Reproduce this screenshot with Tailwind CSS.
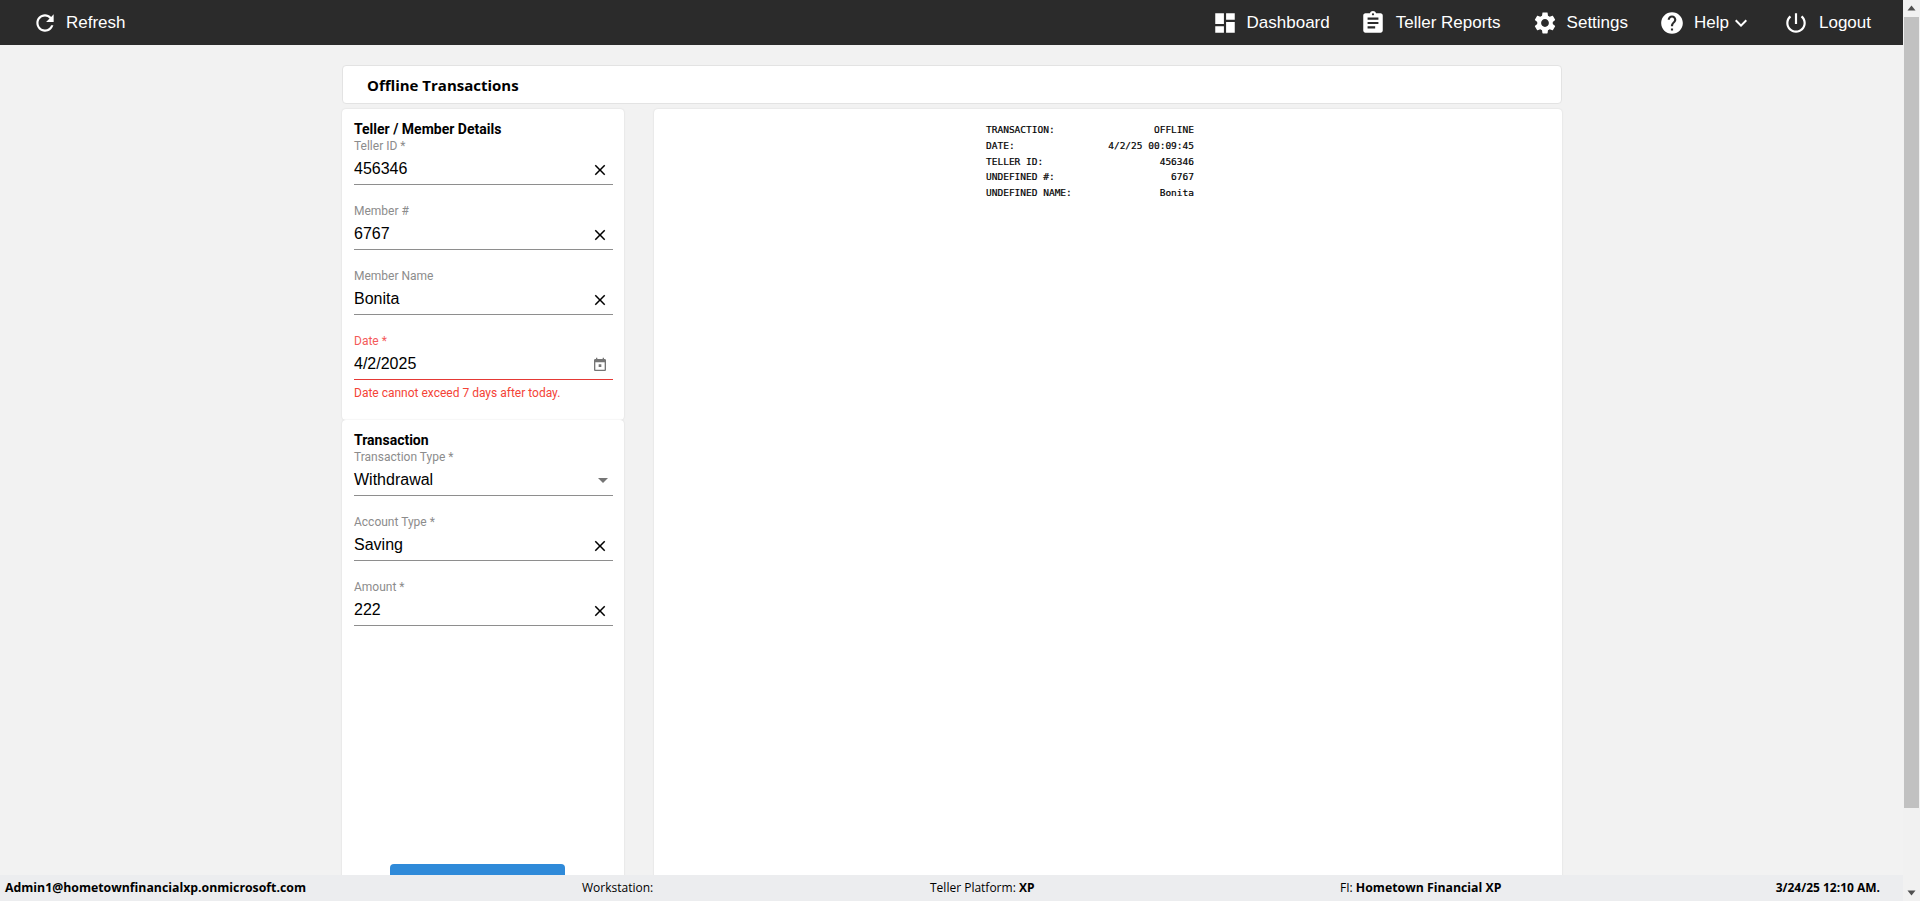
<!DOCTYPE html>
<html lang="en">
    <head>
        <meta charset="UTF-8" />
        <meta name="viewport" content="width=device-width, initial-scale=1.0" />
        <title>Offline Transactions</title>
        <script src="https://cdn.jsdelivr.net/npm/@tailwindcss/browser@4"></script>
    </head>

    <body class="h-[901px] overflow-hidden bg-[#f2f2f2] font-['Liberation_Sans',sans-serif] text-black">
        <div class="relative flex h-[901px]">
            <div class="relative h-full w-[1903px] overflow-hidden">
                <!-- top bar -->
                <nav class="flex h-[45px] items-center bg-[#2b2b2b] text-[17px] text-white">
                    <a class="ml-[32px] flex items-center" href="#">
                        <svg viewBox="0 0 24 24" fill="currentColor" class="h-[26px] w-[26px]"><path d="M17.65 6.35C16.2 4.9 14.21 4 12 4c-4.42 0-7.99 3.58-7.99 8s3.57 8 7.99 8c3.73 0 6.84-2.55 7.73-6h-2.08c-.82 2.33-3.04 4-5.65 4-3.31 0-6-2.69-6-6s2.69-6 6-6c1.66 0 3.14.69 4.22 1.78L13 11h7V4l-2.35 2.35z" /></svg>
                        <span class="ml-[8px]">Refresh</span>
                    </a>
                    <div class="ml-auto flex items-center pr-[32px]">
                        <a class="flex items-center" href="#">
                            <svg viewBox="0 0 24 24" fill="currentColor" class="h-[26px] w-[26px]"><path d="M3 13h8V3H3v10zm0 8h8v-6H3v6zm10 0h8V11h-8v10zm0-18v6h8V3h-8z" /></svg>
                            <span class="ml-[9px]">Dashboard</span>
                        </a>
                        <a class="ml-[30px] flex items-center" href="#">
                            <svg viewBox="0 0 24 24" fill="currentColor" class="h-[26px] w-[26px]"><path d="M19 3h-4.18C14.4 1.84 13.3 1 12 1c-1.3 0-2.4.84-2.82 2H5c-1.1 0-2 .9-2 2v14c0 1.1.9 2 2 2h14c1.1 0 2-.9 2-2V5c0-1.1-.9-2-2-2zm-7 0c.55 0 1 .45 1 1s-.45 1-1 1-1-.45-1-1 .45-1 1-1zm2 14H7v-2h7v2zm3-4H7v-2h10v2zm0-4H7V7h10v2z" /></svg>
                            <span class="ml-[10px]">Teller Reports</span>
                        </a>
                        <a class="ml-[31px] flex items-center" href="#">
                            <svg viewBox="0 0 24 24" fill="currentColor" class="h-[26px] w-[26px]"><path d="M19.14 12.94c.04-.3.06-.61.06-.94 0-.32-.02-.64-.07-.94l2.03-1.58c.18-.14.23-.41.12-.61l-1.92-3.32c-.12-.22-.37-.29-.59-.22l-2.39.96c-.5-.38-1.03-.7-1.62-.94l-.36-2.54c-.04-.24-.24-.41-.48-.41h-3.84c-.24 0-.43.17-.47.41l-.36 2.54c-.59.24-1.13.57-1.62.94l-2.39-.96c-.22-.08-.47 0-.59.22L2.74 8.87c-.12.21-.08.47.12.61l2.03 1.58c-.05.3-.09.63-.09.94s.02.64.07.94l-2.03 1.58c-.18.14-.23.41-.12.61l1.92 3.32c.12.22.37.29.59.22l2.39-.96c.5.38 1.03.7 1.62.94l.36 2.54c.05.24.24.41.48.41h3.84c.24 0 .44-.17.47-.41l.36-2.54c.59-.24 1.13-.56 1.62-.94l2.39.96c.22.08.47 0 .59-.22l1.92-3.32c.12-.22.07-.47-.12-.61l-2.01-1.58zM12 15.6c-1.98 0-3.6-1.62-3.6-3.6s1.62-3.6 3.6-3.6 3.6 1.62 3.6 3.6-1.62 3.6-3.6 3.6z" /></svg>
                            <span class="ml-[9px]">Settings</span>
                        </a>
                        <a class="ml-[31px] flex items-center" href="#">
                            <svg viewBox="0 0 24 24" fill="currentColor" class="h-[26px] w-[26px]"><path d="M12 2C6.48 2 2 6.48 2 12s4.48 10 10 10 10-4.48 10-10S17.52 2 12 2zm1 17h-2v-2h2v2zm2.07-7.75l-.9.92C13.45 12.9 13 13.5 13 15h-2v-.5c0-1.1.45-2.1 1.17-2.83l1.24-1.26c.37-.36.59-.86.59-1.41 0-1.1-.9-2-2-2s-2 .9-2 2H8c0-2.21 1.79-4 4-4s4 1.79 4 4c0 .88-.36 1.68-.93 2.25z" /></svg>
                            <span class="ml-[9px]">Help</span>
                            <svg viewBox="0 0 24 24" fill="currentColor" class="h-[24px] w-[24px]"><path d="M16.59 8.59L12 13.17 7.41 8.59 6 10l6 6 6-6z" /></svg>
                        </a>
                        <a class="ml-[30px] flex items-center" href="#">
                            <svg viewBox="0 0 24 24" fill="currentColor" class="h-[26px] w-[26px]"><path d="M13 3h-2v10h2V3zm4.83 2.17l-1.42 1.42C17.99 7.86 19 9.81 19 12c0 3.87-3.13 7-7 7s-7-3.13-7-7c0-2.19 1.01-4.14 2.58-5.42L6.17 5.17C4.23 6.82 3 9.26 3 12c0 4.97 4.03 9 9 9s9-4.03 9-9c0-2.74-1.23-5.18-3.17-6.83z" /></svg>
                            <span class="ml-[10px]">Logout</span>
                        </a>
                    </div>
                </nav>

                <main class="ml-[342px] w-[1220px] pt-[20px]">
                    <div class="flex h-[39px] items-center rounded border border-[#e3e3e3] bg-white pt-[1px] pl-[24px] font-['Open_Sans',sans-serif] text-[15px] font-bold">Offline Transactions</div>

                    <div class="mt-[5px] flex gap-[30px]">
                        <div class="w-[282px]">
                            <section class="h-[311px] rounded bg-white pt-[11px] pr-[11px] pl-[12px] font-['Roboto',sans-serif] shadow-[0_0_2px_rgba(0,0,0,0.12)]">
                                <h2 class="text-[14px] leading-[19px] font-bold">Teller / Member Details</h2>
                                <div>
                                    <div class="text-[12px] leading-[14px] text-[#8c8c8c]">Teller ID *</div>
                                    <div class="flex h-[32px] items-center justify-between border-b border-[#8e8e8e] pt-[1px] font-['Liberation_Sans',sans-serif] text-[16px]">
                                        <span>456346</span>
                                        <svg viewBox="0 0 24 24" fill="currentColor" class="mt-[1px] mr-[4px] h-[18px] w-[18px]"><path d="M19 6.41L17.59 5 12 10.59 6.41 5 5 6.41 10.59 12 5 17.59 6.41 19 12 13.41 17.59 19 19 17.59 13.41 12 19 6.41z" /></svg>
                                    </div>
                                </div>
                                <div class="pt-[19px]">
                                    <div class="text-[12px] leading-[14px] text-[#8c8c8c]">Member #</div>
                                    <div class="flex h-[32px] items-center justify-between border-b border-[#8e8e8e] pt-[1px] font-['Liberation_Sans',sans-serif] text-[16px]">
                                        <span>6767</span>
                                        <svg viewBox="0 0 24 24" fill="currentColor" class="mt-[1px] mr-[4px] h-[18px] w-[18px]"><path d="M19 6.41L17.59 5 12 10.59 6.41 5 5 6.41 10.59 12 5 17.59 6.41 19 12 13.41 17.59 19 19 17.59 13.41 12 19 6.41z" /></svg>
                                    </div>
                                </div>
                                <div class="pt-[19px]">
                                    <div class="text-[12px] leading-[14px] text-[#8c8c8c]">Member Name</div>
                                    <div class="flex h-[32px] items-center justify-between border-b border-[#8e8e8e] pt-[1px] font-['Liberation_Sans',sans-serif] text-[16px]">
                                        <span>Bonita</span>
                                        <svg viewBox="0 0 24 24" fill="currentColor" class="mt-[1px] mr-[4px] h-[18px] w-[18px]"><path d="M19 6.41L17.59 5 12 10.59 6.41 5 5 6.41 10.59 12 5 17.59 6.41 19 12 13.41 17.59 19 19 17.59 13.41 12 19 6.41z" /></svg>
                                    </div>
                                </div>
                                <div class="pt-[19px]">
                                    <div class="text-[12px] leading-[14px] text-[#f45a5a]">Date *</div>
                                    <div class="flex h-[32px] items-center justify-between border-b border-[#e53935] pt-[1px] font-['Liberation_Sans',sans-serif] text-[16px]">
                                        <span>4/2/2025</span>
                                        <svg viewBox="0 0 24 24" fill="#757575" class="mt-[1px] mr-[5px] h-[16px] w-[16px]"><path d="M19 3h-1V1h-2v2H8V1H6v2H5c-1.11 0-1.99.9-1.99 2L3 19c0 1.1.89 2 2 2h14c1.1 0 2-.9 2-2V5c0-1.1-.9-2-2-2zm0 16H5V8h14v11zM10 11h4v4h-4z" /></svg>
                                    </div>
                                    <div class="mt-[6px] text-[12px] leading-[14px] text-[#f44336]">Date cannot exceed 7 days after today.</div>
                                </div>
                            </section>

                            <section class="relative h-[560px] rounded bg-white pt-[11px] pr-[11px] pl-[12px] font-['Roboto',sans-serif] shadow-[0_0_2px_rgba(0,0,0,0.12)]">
                                <h2 class="text-[14px] leading-[19px] font-bold">Transaction</h2>
                                <div>
                                    <div class="text-[12px] leading-[14px] text-[#8c8c8c]">Transaction Type *</div>
                                    <div class="flex h-[32px] items-center justify-between border-b border-[#8e8e8e] pt-[1px] font-['Liberation_Sans',sans-serif] text-[16px]">
                                        <span>Withdrawal</span>
                                        <svg viewBox="0 0 24 24" fill="#757575" class="-mr-[2px] h-[24px] w-[24px]"><path d="M7 10l5 5 5-5z" /></svg>
                                    </div>
                                </div>
                                <div class="pt-[19px]">
                                    <div class="text-[12px] leading-[14px] text-[#8c8c8c]">Account Type *</div>
                                    <div class="flex h-[32px] items-center justify-between border-b border-[#8e8e8e] pt-[1px] font-['Liberation_Sans',sans-serif] text-[16px]">
                                        <span>Saving</span>
                                        <svg viewBox="0 0 24 24" fill="currentColor" class="mt-[1px] mr-[4px] h-[18px] w-[18px]"><path d="M19 6.41L17.59 5 12 10.59 6.41 5 5 6.41 10.59 12 5 17.59 6.41 19 12 13.41 17.59 19 19 17.59 13.41 12 19 6.41z" /></svg>
                                    </div>
                                </div>
                                <div class="pt-[19px]">
                                    <div class="text-[12px] leading-[14px] text-[#8c8c8c]">Amount *</div>
                                    <div class="flex h-[32px] items-center justify-between border-b border-[#8e8e8e] pt-[1px] font-['Liberation_Sans',sans-serif] text-[16px]">
                                        <span>222</span>
                                        <svg viewBox="0 0 24 24" fill="currentColor" class="mt-[1px] mr-[4px] h-[18px] w-[18px]"><path d="M19 6.41L17.59 5 12 10.59 6.41 5 5 6.41 10.59 12 5 17.59 6.41 19 12 13.41 17.59 19 19 17.59 13.41 12 19 6.41z" /></svg>
                                    </div>
                                </div>
                                <div class="mt-[238px] ml-[36px] h-[36px] w-[175px] rounded bg-[#2f8ad9]"></div>
                            </section>
                        </div>

                        <!-- receipt -->
                        <section class="h-[871px] flex-1 rounded bg-white pt-[13px] pl-[332px] font-['DejaVu_Sans_Mono',monospace] text-[9.5px] leading-[15.75px] shadow-[0_0_2px_rgba(0,0,0,0.12)] [-webkit-text-stroke:0.2px_black]">
                            <div class="w-[208px]">
                                <div class="flex justify-between"><span>TRANSACTION:</span><span>OFFLINE</span></div>
                                <div class="flex justify-between"><span>DATE:</span><span>4/2/25 00:09:45</span></div>
                                <div class="flex justify-between"><span>TELLER ID:</span><span>456346</span></div>
                                <div class="flex justify-between"><span>UNDEFINED #:</span><span>6767</span></div>
                                <div class="flex justify-between"><span>UNDEFINED NAME:</span><span>Bonita</span></div>
                            </div>
                        </section>
                    </div>
                </main>

                <footer class="fixed bottom-0 left-0 grid h-[26px] w-[1903px] grid-cols-[577px_348px_410px_1fr] items-center bg-[#ecedef] pl-[5px] font-['Open_Sans',sans-serif] text-[12px]">
                    <div class="text-[12.3px] font-bold">Admin1@hometownfinancialxp.onmicrosoft.com</div>
                    <div>Workstation:</div>
                    <div>Teller Platform: <b>XP</b></div>
                    <div class="flex justify-between pr-[23px]"><span>FI: <b class="text-[12.3px]">Hometown Financial XP</b></span><b>3/24/25 12:10 AM.</b></div>
                </footer>
            </div>

            <!-- page scrollbar -->
            <div class="flex w-[17px] flex-col items-center bg-[#f1f1f1]">
                <svg viewBox="0 0 17 17" fill="#505050" class="h-[17px] w-[17px]"><path d="M8.5 5.5l4 5h-8z" /></svg>
                <div class="h-[791px] w-[15px] bg-[#c1c1c1]"></div>
                <svg viewBox="0 0 17 17" fill="#505050" class="mt-auto h-[17px] w-[17px]"><path d="M8.5 11.5l4-5h-8z" /></svg>
            </div>
        </div>
    </body>
</html>
